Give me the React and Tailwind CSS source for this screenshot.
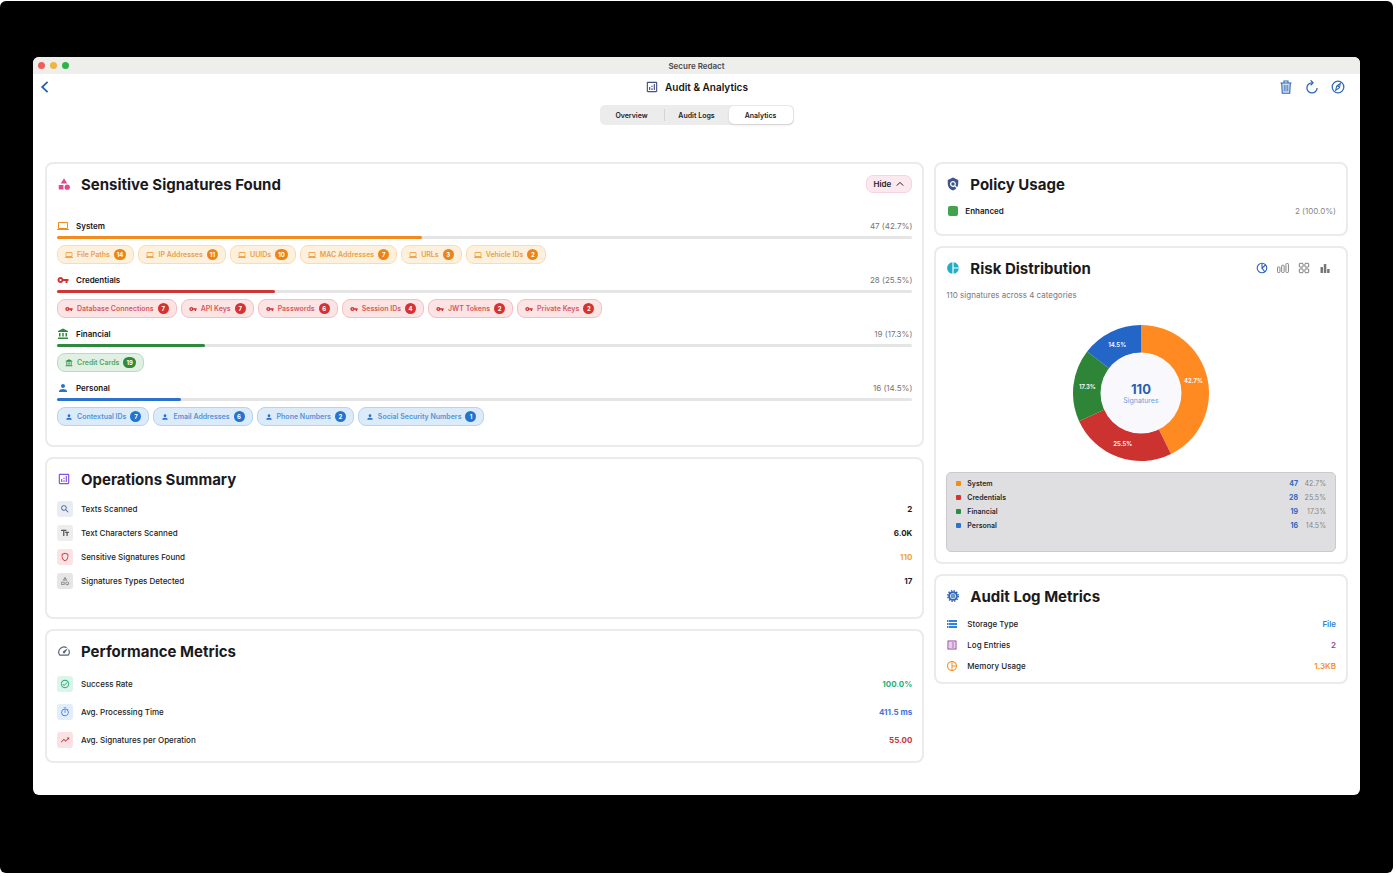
import React from 'react';
import {
  MdCategory, MdOutlineCategory, MdLaptop, MdVpnKey, MdAccountBalance, MdPerson,
  MdOutlineAnalytics, MdSearch, MdTextFields, MdOutlineShield, MdOutlineSpeed,
  MdOutlineCheckCircle, MdOutlineTimer, MdTrendingUp, MdPolicy, MdPieChart,
  MdOutlinePieChart, MdStorage, MdOutlineListAlt,
} from 'react-icons/md';

const categories = [
  {
    name: 'System', count: 47, pct: 42.7, color: '#f28c1e', slice: '#ff8a22', icon: MdLaptop,
    pill: 'bg-[#fdf1dd] border-[#f8dcb4] text-[#e9a04a]', badge: 'bg-[#ee8417]',
    items: [['File Paths', 14], ['IP Addresses', 11], ['UUIDs', 10], ['MAC Addresses', 7], ['URLs', 3], ['Vehicle IDs', 2]],
  },
  {
    name: 'Credentials', count: 28, pct: 25.5, color: '#d03434', slice: '#cb3230', icon: MdVpnKey,
    pill: 'bg-[#fce4e5] border-[#f3c0c2] text-[#d65a5c]', badge: 'bg-[#d63230]',
    items: [['Database Connections', 7], ['API Keys', 7], ['Passwords', 6], ['Session IDs', 4], ['JWT Tokens', 2], ['Private Keys', 2]],
  },
  {
    name: 'Financial', count: 19, pct: 17.3, color: '#2f8a3e', slice: '#2e8538', icon: MdAccountBalance,
    pill: 'bg-[#e0f0e2] border-[#b9dcbd] text-[#5aa562]', badge: 'bg-[#2f8a3a]',
    items: [['Credit Cards', 19]],
  },
  {
    name: 'Personal', count: 16, pct: 14.5, color: '#2a72cc', slice: '#2465c8', icon: MdPerson,
    pill: 'bg-[#dcebfa] border-[#b5d3f3] text-[#5493d6]', badge: 'bg-[#2274d0]',
    items: [['Contextual IDs', 7], ['Email Addresses', 6], ['Phone Numbers', 2], ['Social Security Numbers', 1]],
  },
];

const operations = [
  { label: 'Texts Scanned', value: '2', icon: MdSearch, box: 'bg-[#e9edf2] text-[#48648c]', text: 'text-[#1c1c1e]' },
  { label: 'Text Characters Scanned', value: '6.0K', icon: MdTextFields, box: 'bg-[#ededee] text-[#555555]', text: 'text-[#1c1c1e]' },
  { label: 'Sensitive Signatures Found', value: '110', icon: MdOutlineShield, box: 'bg-[#fae3e4] text-[#c63c42]', text: 'text-[#eba53a]' },
  { label: 'Signatures Types Detected', value: '17', icon: MdOutlineCategory, box: 'bg-[#e6e6e7] text-[#808080]', text: 'text-[#1c1c1e]' },
];

const performanceRows = [
  { label: 'Success Rate', value: '100.0%', icon: MdOutlineCheckCircle, box: 'bg-[#dcf5ea] text-[#27a877]', text: 'text-[#27b07c]' },
  { label: 'Avg. Processing Time', value: '411.5 ms', icon: MdOutlineTimer, box: 'bg-[#e2edfb] text-[#3d78d8]', text: 'text-[#3f74d6]' },
  { label: 'Avg. Signatures per Operation', value: '55.00', icon: MdTrendingUp, box: 'bg-[#fae1e3] text-[#cc3640]', text: 'text-[#cc3640]' },
];

const auditRows = [
  { label: 'Storage Type', value: 'File', icon: MdStorage, text: 'text-[#2f83d8]' },
  { label: 'Log Entries', value: '2', icon: MdOutlineListAlt, text: 'text-[#9340a6]' },
  { label: 'Memory Usage', value: '1.3KB', icon: MdOutlinePieChart, text: 'text-[#f0922a]' },
];

const Card = ({ className, children }) => (
  <section className={`rounded-lg border-2 border-[#ebebed] bg-white px-[10px] pt-[9px] ${className}`}>
    {children}
  </section>
);

const CardTitle = ({ icon: Icon, color, children }) => (
  <h2 className="flex h-[22px] items-center gap-[10px] text-[15px] font-bold text-[#1a1a1c]">
    <Icon className={`size-[14px] ${color}`} />
    {children}
  </h2>
);

const MetricRow = ({ row, height }) => {
  const Icon = row.icon;
  return (
    <div className={`flex items-center gap-2 text-[8px] ${height}`}>
      <dt className="flex flex-1 items-center gap-2 font-medium text-[#1c1c1e]">
        <span className={`flex size-4 items-center justify-center rounded-[3px] ${row.box}`}>
          <Icon className="size-[10px]" />
        </span>
        {row.label}
      </dt>
      <dd className={`font-bold ${row.text}`}>{row.value}</dd>
    </div>
  );
};

const ChipIcon = ({ className }) => (
  <svg viewBox="0 0 24 24" className={className} fill="none" stroke="currentColor">
    <circle cx="12" cy="12" r="9" strokeWidth="2.6" strokeDasharray="2.4 2.31" />
    <circle cx="12" cy="12" r="6.6" strokeWidth="3.4" />
    <rect x="10" y="10" width="4" height="4" strokeWidth="2" />
  </svg>
);

const chartTypes = [
  {
    name: 'Donut chart', active: true,
    art: (
      <g fill="none" stroke="currentColor" strokeWidth="2.2">
        <circle cx="12" cy="12" r="9.6" />
        <path d="M12 2.4V12l7.4-6M12 12l5.6 7.6" />
      </g>
    ),
  },
  {
    name: 'Bar chart',
    art: (
      <g fill="none" stroke="currentColor" strokeWidth="1.8">
        <rect x="0.9" y="10" width="5" height="11" rx="1.6" />
        <rect x="9.3" y="6.5" width="5" height="14.5" rx="1.6" />
        <rect x="17.9" y="3" width="5" height="18" rx="1.6" />
      </g>
    ),
  },
  {
    name: 'Grid',
    art: (
      <g fill="none" stroke="currentColor" strokeWidth="2">
        <rect x="2.6" y="2.6" width="7.6" height="7.6" rx="1.8" />
        <rect x="13.8" y="2.6" width="7.6" height="7.6" rx="1.8" />
        <rect x="2.6" y="13.8" width="7.6" height="7.6" rx="1.8" />
        <rect x="13.8" y="13.8" width="7.6" height="7.6" rx="1.8" />
      </g>
    ),
  },
  {
    name: 'Columns',
    art: (
      <g fill="currentColor">
        <rect x="3" y="10" width="5" height="12" rx="1" />
        <rect x="9.6" y="4" width="5" height="18" rx="1" />
        <rect x="16.2" y="14" width="5" height="8" rx="1" />
      </g>
    ),
  },
];

const point = (r, turn) => {
  const a = turn * 2 * Math.PI;
  return [68 + r * Math.sin(a), 68 - r * Math.cos(a)];
};

function Donut() {
  let from = 0;
  return (
    <svg viewBox="0 0 136 136" className="size-[136px]" role="img" aria-label="Risk distribution by category">
      {categories.map((c) => {
        const to = from + c.count / 110;
        const large = to - from > 0.5 ? 1 : 0;
        const [x1, y1] = point(68, from);
        const [x2, y2] = point(68, to);
        const [x3, y3] = point(40, to);
        const [x4, y4] = point(40, from);
        const [tx, ty] = point(54, (from + to) / 2);
        from = to;
        return (
          <g key={c.name}>
            <path
              d={`M${x1} ${y1}A68 68 0 ${large} 1 ${x2} ${y2}L${x3} ${y3}A40 40 0 ${large} 0 ${x4} ${y4}Z`}
              fill={c.slice}
            />
            <text x={tx} y={ty + 2} textAnchor="middle" className="fill-white text-[6px] font-semibold">
              {c.pct}%
            </text>
          </g>
        );
      })}
      <circle cx="68" cy="68" r="40.5" fill="#f8f8fd" />
      <text x="68" y="69" textAnchor="middle" className="fill-[#2461b0] text-[13px] font-bold">110</text>
      <text x="68" y="78" textAnchor="middle" className="fill-[#6f9fd6] text-[7px]">Signatures</text>
    </svg>
  );
}

export default function App() {
  return (
    <div className="mt-px mr-[3px] rounded-md bg-black px-[33px] pt-14 pb-[78px] font-[Inter,sans-serif] leading-none">
      <div className="overflow-hidden rounded-md bg-white pb-8">
        {/* Title bar */}
        <div className="grid h-[17px] grid-cols-3 items-center bg-[#eeeeec]">
          <div className="flex gap-[5px] pl-[5px]">
            <span className="size-[7px] rounded-full bg-[#ec5f5a]" />
            <span className="size-[7px] rounded-full bg-[#efb53f]" />
            <span className="size-[7px] rounded-full bg-[#2bb549]" />
          </div>
          <p className="text-center text-[8px] font-semibold text-[#4a4a4a]">Secure Redact</p>
        </div>

        {/* Toolbar */}
        <header className="grid h-[26px] grid-cols-3 items-center px-[6px]">
          <button type="button" aria-label="Back" className="w-3 text-[#2b62ad]">
            <svg viewBox="0 0 12 12" className="size-3" fill="none" stroke="currentColor" strokeWidth="1.8">
              <path d="M8.6 0.8 3.2 6l5.4 5.2" />
            </svg>
          </button>
          <h1 className="flex items-center justify-center gap-[6px] text-[10px] font-semibold text-[#151517]">
            <MdOutlineAnalytics className="size-[14px] text-[#46507f]" />
            Audit &amp; Analytics
          </h1>
          <div className="flex justify-end gap-3 pr-[9px] text-[#2f68b4]">
            <button type="button" aria-label="Delete">
              <svg viewBox="0 0 24 24" className="size-[14px]" fill="none" stroke="currentColor" strokeWidth="1.9">
                <path d="M2.5 5.2h19M8.6 5V1.8h6.8V5" />
                <path d="M4.6 5.2 5.6 22.6h12.8l1-17.4" fill="#2f68b433" />
                <path d="M9 8.5v11M12 8.5v11M15 8.5v11" strokeWidth="1.4" />
              </svg>
            </button>
            <button type="button" aria-label="Refresh">
              <svg viewBox="0 0 24 24" className="size-[14px]" fill="none" stroke="currentColor" strokeWidth="2.2">
                <path d="M13 4.8H12a8.7 8.7 0 1 0 8.7 8.7" />
                <path d="M9.6 0.6 13.8 4.8 9.6 9" />
              </svg>
            </button>
            <button type="button" aria-label="Explore">
              <svg viewBox="0 0 24 24" className="size-[14px]" fill="none" stroke="currentColor" strokeWidth="2.2">
                <circle cx="12" cy="12" r="10" />
                <path d="M8 17.5 10 10l6-4-1.4 7z" strokeWidth="1.8" />
                <circle cx="12.4" cy="10.6" r="1.8" fill="currentColor" stroke="none" />
              </svg>
            </button>
          </div>
        </header>

        <nav className="mx-auto mt-[5px] flex h-5 w-[194px] items-center rounded-[5px] bg-[#ececed] text-[7px] font-semibold text-[#1c1c1e]">
          <button type="button" className="h-full flex-1">Overview</button>
          <span className="h-3 w-px bg-[#d5d5d7]" />
          <button type="button" className="h-full flex-1">Audit Logs</button>
          <button type="button" className="mr-px h-[18px] flex-1 rounded-[5px] bg-white shadow">Analytics</button>
        </nav>

        <main className="mt-[37px] grid grid-cols-[880fr_414fr] items-start gap-[10px] px-3">
          <div className="flex flex-col gap-[10px]">
            {/* Signatures */}
            <Card className="pb-[19px]">
              <div className="flex items-center justify-between">
                <CardTitle icon={MdCategory} color="text-[#e2468c]">Sensitive Signatures Found</CardTitle>
                <button type="button" className="flex h-[18px] items-center gap-[5px] rounded-[7px] border border-[#f7d3df] bg-[#fce8ef] px-[7px] text-[8px] font-semibold text-[#1c1c1e]">
                  Hide
                  <svg viewBox="0 0 8 8" className="size-2" fill="none" stroke="currentColor">
                    <path d="M0.8 5.6 4 2.4l3.2 3.2" />
                  </svg>
                </button>
              </div>
              <div className="mt-[23px] flex flex-col gap-2">
                {categories.map((c) => {
                  const Icon = c.icon;
                  return (
                    <div key={c.name}>
                      <div className="flex h-4 items-center gap-[7px] text-[8px]">
                        <Icon className="size-3" style={{ color: c.color }} />
                        <h3 className="flex-1 font-semibold text-[#151517]">{c.name}</h3>
                        <span className="text-[#757577]">{c.count} ({c.pct}%)</span>
                      </div>
                      <div className="mt-[2px] h-[3px] rounded-full bg-[#e5e5e6]">
                        <div className="h-full rounded-full" style={{ width: `${c.pct}%`, background: c.color }} />
                      </div>
                      <ul className="mt-[6px] flex flex-wrap gap-1">
                        {c.items.map(([label, n]) => (
                          <li key={label} className={`flex h-[19px] items-center gap-1 rounded-lg border px-[7px] text-[7px] font-semibold ${c.pill}`}>
                            <Icon className="size-2" style={{ color: c.color }} />
                            {label}
                            <span className={`flex h-[11px] min-w-[11px] items-center justify-center rounded-full text-[6px] font-bold text-white ${c.badge} ${n > 9 ? 'px-[3px]' : ''}`}>
                              {n}
                            </span>
                          </li>
                        ))}
                      </ul>
                    </div>
                  );
                })}
              </div>
            </Card>

            {/* Operations */}
            <Card className="pb-6">
              <CardTitle icon={MdOutlineAnalytics} color="text-[#8455dc]">Operations Summary</CardTitle>
              <dl className="mt-[7px]">
                {operations.map((row) => <MetricRow key={row.label} row={row} height="h-6" />)}
              </dl>
            </Card>

            {/* Performance */}
            <Card className="pb-[7px]">
              <CardTitle icon={MdOutlineSpeed} color="text-[#5b6475]">Performance Metrics</CardTitle>
              <dl className="mt-2">
                {performanceRows.map((row) => <MetricRow key={row.label} row={row} height="h-7" />)}
              </dl>
            </Card>
          </div>

          <div className="flex flex-col gap-[10px]">
            {/* Policy */}
            <Card className="pb-[15px]">
              <CardTitle icon={MdPolicy} color="text-[#3f5488]">Policy Usage</CardTitle>
              <div className="mt-2 flex h-4 items-center gap-[7px] pl-[2px] text-[8px]">
                <span className="size-[10px] rounded-[2px] bg-[#43a34d]" />
                <span className="flex-1 font-semibold text-[#1c1c1e]">Enhanced</span>
                <span className="text-[#858587]">2 (100.0%)</span>
              </div>
            </Card>

            {/* Risk */}
            <Card className="pb-[10px]">
              <div className="flex items-center justify-between">
                <CardTitle icon={MdPieChart} color="text-[#22adc6]">Risk Distribution</CardTitle>
                <div className="flex gap-[9px] pr-[5px]">
                  {chartTypes.map((t) => (
                    <button key={t.name} type="button" aria-label={t.name} className={t.active ? 'text-[#2f5fc4]' : 'text-[#77777a]'}>
                      <svg viewBox="0 0 24 24" className="size-3">{t.art}</svg>
                    </button>
                  ))}
                </div>
              </div>
              <p className="mt-[10px] text-[8px] leading-3 text-[#77777a]">110 signatures across 4 categories</p>
              <div className="mt-6 flex justify-center">
                <Donut />
              </div>
              <div className="mt-[11px] rounded-[5px] border border-[#cbcbcd] bg-[#dfdfe1] px-[9px] pt-[3px] pb-[19px]">
                <table className="w-full text-[7px]">
                  <tbody>
                    {categories.map((c) => (
                      <tr key={c.name} className="h-[14px]">
                        <th scope="row" className="text-left font-semibold text-[#2a2a2c]">
                          <span className="mr-[6px] inline-block size-[5px] rounded-[1px] align-middle" style={{ background: c.color }} />
                          {c.name}
                        </th>
                        <td className="text-right font-bold text-[#2b67bd]">{c.count}</td>
                        <td className="w-7 text-right text-[#858587]">{c.pct}%</td>
                      </tr>
                    ))}
                  </tbody>
                </table>
              </div>
            </Card>

            {/* Audit log */}
            <Card className="pb-[6px]">
              <CardTitle icon={ChipIcon} color="text-[#2f66b8]">Audit Log Metrics</CardTitle>
              <dl className="mt-[6px]">
                {auditRows.map((row) => {
                  const Icon = row.icon;
                  return (
                    <div key={row.label} className="flex h-[21px] items-center text-[8px]">
                      <dt className="flex flex-1 items-center gap-[9px] font-medium text-[#1c1c1e]">
                        <Icon className={`size-3 ${row.text}`} />
                        {row.label}
                      </dt>
                      <dd className={`font-semibold ${row.text}`}>{row.value}</dd>
                    </div>
                  );
                })}
              </dl>
            </Card>
          </div>
        </main>
      </div>
    </div>
  );
}
